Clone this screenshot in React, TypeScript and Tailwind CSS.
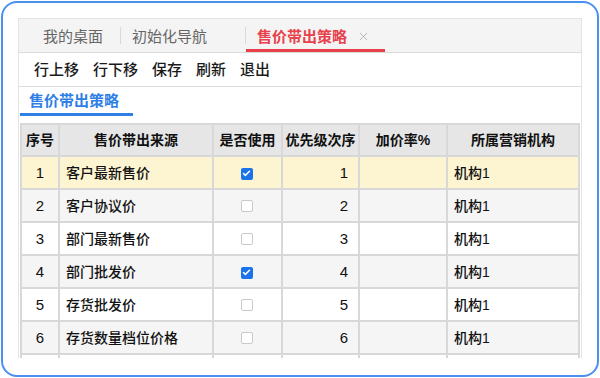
import { Check, X } from "lucide-react";

const rows = [
  { no: 1, source: "客户最新售价", used: true, order: 1, rate: "", org: "机构1" },
  { no: 2, source: "客户协议价", used: false, order: 2, rate: "", org: "机构1" },
  { no: 3, source: "部门最新售价", used: false, order: 3, rate: "", org: "机构1" },
  { no: 4, source: "部门批发价", used: true, order: 4, rate: "", org: "机构1" },
  { no: 5, source: "存货批发价", used: false, order: 5, rate: "", org: "机构1" },
  { no: 6, source: "存货数量档位价格", used: false, order: 6, rate: "", org: "机构1" },
];

const toolbar = ["行上移", "行下移", "保存", "刷新", "退出"];

function CheckBox({ checked }: { checked: boolean }) {
  return checked ? (
    <span className="inline-flex h-[12px] w-[12px] items-center justify-center rounded-[2px] bg-[#1a73e8]">
      <Check className="h-[9px] w-[9px] text-white" strokeWidth={4} />
    </span>
  ) : (
    <span className="inline-block h-[12px] w-[12px] rounded-[2px] border border-[#c9c9c9] bg-white" />
  );
}

export default function App() {
  return (
    <div
      className="h-[378px] w-[600px] bg-white p-[1px]"
      style={{ fontFamily: '"Liberation Sans", "Noto Sans CJK SC", sans-serif' }}
    >
      <div className="h-full overflow-hidden rounded-[16px] border-2 border-[#4b8ff0] px-[15px] pt-[15px]">
        <div className="flex h-[340px] w-[564px] flex-col overflow-hidden border-x border-t border-[#e3e3e3]">
          {/* top tabs */}
          <div className="flex h-[34px] shrink-0 items-stretch border-b border-[#dcdcdc] bg-[#f4f4f4] text-[15px] leading-none">
            <div className="flex w-[101px] items-center pl-[24px] pt-[2px] text-[#666]">我的桌面</div>
            <div className="h-[17px] w-px self-center bg-[#d9d9d9]" />
            <div className="flex w-[124px] items-center pl-[11px] pt-[2px] text-[#666]">初始化导航</div>
            <div className="h-[17px] w-px self-center bg-[#d9d9d9]" />
            <div className="flex w-[139px] items-center border-b-[3px] border-[#e8414b] pl-[11px] pt-[4px] font-bold text-[#e8414b]">
              售价带出策略
              <X className="ml-[10px] h-[13px] w-[13px] text-[#a8a8a8]" strokeWidth={1.5} />
            </div>
          </div>

          {/* toolbar */}
          <div className="flex h-[34px] shrink-0 items-center gap-[14px] border-b border-[#dcdcdc] bg-white pl-[15px] text-[15px] font-medium leading-none text-[#1a1a1a]">
            {toolbar.map((t) => (
              <span key={t}>{t}</span>
            ))}
          </div>

          {/* sub tab */}
          <div className="flex shrink-0 flex-col pb-[7px]">
            <div className="ml-[1px] flex h-[29px] w-[113px] items-center border-b-[3px] border-[#2f7fe6] pl-[9px] pt-[1px] text-[15px] font-bold leading-none text-[#2f7fe6]">
              售价带出策略
            </div>
          </div>

          {/* table */}
          <table className="ml-[1px] w-[558px] table-fixed border-collapse text-[14px] font-medium leading-none text-[#111]">
            <colgroup>
              <col className="w-[38px]" />
              <col className="w-[154px]" />
              <col className="w-[69px]" />
              <col className="w-[77px]" />
              <col className="w-[88px]" />
              <col className="w-[132px]" />
            </colgroup>
            <thead>
              <tr className="h-[32px] bg-[#e6e6e6]">
                {["序号", "售价带出来源", "是否使用", "优先级次序", "加价率%", "所属营销机构"].map((h) => (
                  <th key={h} className="border-2 border-[#d8d8d8] px-0 text-center font-bold">
                    {h}
                  </th>
                ))}
              </tr>
            </thead>
            <tbody>
              {rows.map((r) => (
                <tr
                  key={r.no}
                  className={
                    r.no === 1 ? "h-[33px] bg-[#fdf5d1]" : r.no % 2 === 0 ? "h-[33px] bg-[#f5f5f5]" : "h-[33px] bg-white"
                  }
                >
                  <td className="border-2 border-[#d8d8d8] text-center text-[15px]">{r.no}</td>
                  <td className="border-2 border-[#d8d8d8] pl-[6px]">{r.source}</td>
                  <td className="border-2 border-[#d8d8d8] text-center">
                    <span className="inline-flex pt-[3px] pr-[2px]">
                      <CheckBox checked={r.used} />
                    </span>
                  </td>
                  <td className="border-2 border-[#d8d8d8] pr-[10px] text-right text-[15px]">{r.order}</td>
                  <td className="border-2 border-[#d8d8d8]">{r.rate}</td>
                  <td className="border-2 border-[#d8d8d8] pl-[6px]">{r.org}</td>
                </tr>
              ))}
              <tr className="h-[33px] bg-white">
                <td className="border-2 border-[#d8d8d8]" />
                <td className="border-2 border-[#d8d8d8]" />
                <td className="border-2 border-[#d8d8d8]" />
                <td className="border-2 border-[#d8d8d8]" />
                <td className="border-2 border-[#d8d8d8]" />
                <td className="border-2 border-[#d8d8d8]" />
              </tr>
            </tbody>
          </table>
        </div>
      </div>
    </div>
  );
}
